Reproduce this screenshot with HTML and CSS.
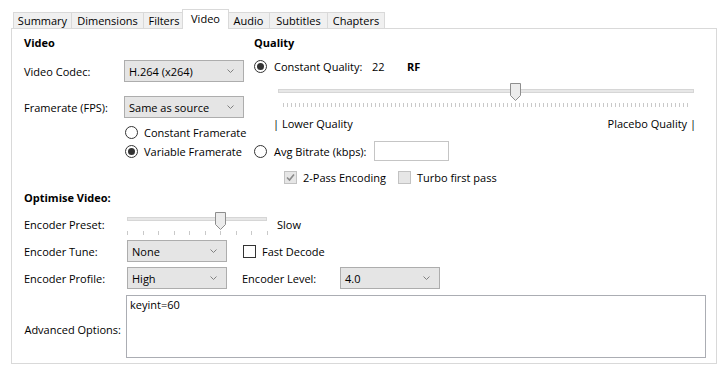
FILE: index.html
```html
<!DOCTYPE html>
<html>
<head>
<meta charset="utf-8">
<link rel="stylesheet" href="styles.css">
</head>
<body>
<div class="tabs">
  <div class="tab t-sum">Summary</div>
  <div class="tab t-dim">Dimensions</div>
  <div class="tab t-fil">Filters</div>
  <div class="tab active t-vid">Video</div>
  <div class="tab t-aud">Audio</div>
  <div class="tab t-sub">Subtitles</div>
  <div class="tab last t-cha">Chapters</div>
</div>
<div class="panel">
  <div class="top">
    <div class="col col-left">
      <div class="heading">Video</div>
      <div class="row row-codec">
        <span class="lbl lbl-100">Video Codec:</span>
        <div class="combo w120"><span>H.264 (x264)</span><svg class="chev" width="7" height="5" viewBox="0 0 7 5"><polyline points="0.5,0.5 3.5,3.5 6.5,0.5" fill="none" stroke="#808080" stroke-width="1"/></svg></div>
      </div>
      <div class="row row-fps">
        <span class="lbl lbl-100">Framerate (FPS):</span>
        <div class="combo w120"><span>Same as source</span><svg class="chev" width="7" height="5" viewBox="0 0 7 5"><polyline points="0.5,0.5 3.5,3.5 6.5,0.5" fill="none" stroke="#808080" stroke-width="1"/></svg></div>
      </div>
      <div class="opt-row fr1"><span class="radio"></span><span>Constant Framerate</span></div>
      <div class="opt-row fr2"><span class="radio on"></span><span>Variable Framerate</span></div>
    </div>
    <div class="col col-right">
      <div class="heading">Quality</div>
      <div class="opt-row cq"><span class="radio on"></span><span class="cq-lbl">Constant Quality:</span><span class="cq-val">22</span><b>RF</b></div>
      <div class="slider q-slider">
        <div class="track"></div>
        <div class="ticks"></div>
        <svg class="thumb" style="left:232px" width="11" height="18" viewBox="0 0 11 18"><path d="M0.5 0.5 H10.5 V12.5 L5.5 17.5 L0.5 12.5 Z" fill="#ececec" stroke="#8e8e8e"/></svg>
      </div>
      <div class="q-labels"><span>| Lower Quality</span><span>Placebo Quality |</span></div>
      <div class="opt-row avg"><span class="radio"></span><span class="avg-lbl">Avg Bitrate (kbps):</span><div class="input"></div></div>
      <div class="cb-row">
        <span class="check dis on"><svg width="11" height="11" viewBox="0 0 11 11"><polyline points="2,5.5 4.5,8 9,2.5" fill="none" stroke="#8a8a8a" stroke-width="1.6"/></svg></span><span class="cb-lbl">2-Pass Encoding</span>
        <span class="check dis turbo"></span><span class="cb-lbl">Turbo first pass</span>
      </div>
    </div>
  </div>

  <div class="opt">
    <div class="heading opt-head">Optimise Video:</div>
    <div class="row row-preset">
      <span class="lbl lbl-103">Encoder Preset:</span>
      <div class="slider p-slider">
        <div class="track"></div>
        <div class="ticks"></div>
        <svg class="thumb" style="left:88px" width="11" height="18" viewBox="0 0 11 18"><path d="M0.5 0.5 H10.5 V12.5 L5.5 17.5 L0.5 12.5 Z" fill="#ececec" stroke="#8e8e8e"/></svg>
      </div>
      <span class="slow">Slow</span>
    </div>
    <div class="row row-tune">
      <span class="lbl lbl-103">Encoder Tune:</span>
      <div class="combo w100"><span>None</span><svg class="chev" width="7" height="5" viewBox="0 0 7 5"><polyline points="0.5,0.5 3.5,3.5 6.5,0.5" fill="none" stroke="#808080" stroke-width="1"/></svg></div>
      <span class="check fast"></span><span class="cb-lbl">Fast Decode</span>
    </div>
    <div class="row row-profile">
      <span class="lbl lbl-103">Encoder Profile:</span>
      <div class="combo w100"><span>High</span><svg class="chev" width="7" height="5" viewBox="0 0 7 5"><polyline points="0.5,0.5 3.5,3.5 6.5,0.5" fill="none" stroke="#808080" stroke-width="1"/></svg></div>
      <span class="lbl level-lbl">Encoder Level:</span>
      <div class="combo w100"><span>4.0</span><svg class="chev" width="7" height="5" viewBox="0 0 7 5"><polyline points="0.5,0.5 3.5,3.5 6.5,0.5" fill="none" stroke="#808080" stroke-width="1"/></svg></div>
    </div>
    <div class="row row-adv">
      <span class="adv-lbl">Advanced Options:</span>
      <div class="textarea">keyint=60</div>
    </div>
  </div>
</div>
</body>
</html>
```

FILE: styles.css
```css
* { box-sizing: border-box; }
html, body { margin: 0; padding: 0; background: #fff; }
body {
  font-family: "Open Sans", "Noto Sans", "DejaVu Sans", sans-serif;
  font-size: 11px;
  color: #000;
  width: 722px;
  height: 372px;
  overflow: hidden;
}

/* tabs */
.tabs {
  display: flex;
  align-items: flex-end;
  margin: 9px 0 0 13px;
  height: 19px;
}
.tab {
  height: 16px;
  line-height: 15px;
  text-align: center;
  border: 1px solid #d9d9d9;
  border-bottom: none;
  border-right: none;
  background: #f0f0f0;
  white-space: nowrap;
  flex: none;
}
.t-sum { width: 58px; }
.t-dim { width: 72px; }
.t-fil { width: 41px; }
.t-vid { width: 47px; }
.t-aud { width: 42px; }
.t-sub { width: 58px; }
.t-cha { width: 58px; }
.tab.last { border-right: 1px solid #d9d9d9; }
.tab.active {
  height: 20px;
  line-height: 17px;
  background: #fff;
  border-right: 1px solid #d9d9d9;
  margin: 0 -2px -1px -2px;
  position: relative;
  z-index: 1;
}

/* panel */
.panel {
  margin-left: 11px;
  width: 706px;
  height: 336px;
  border: 1px solid #d9d9d9;
  padding-left: 12px;
}
.top {
  display: grid;
  grid-template-columns: 230px 1fr;
}
.col { display: flex; flex-direction: column; }
.heading {
  height: 16px;
  line-height: 16px;
  font-weight: bold;
  margin-top: 6px;
}
.row { display: flex; align-items: center; }
.lbl { white-space: nowrap; }
.lbl-100 { width: 100px; }
.lbl-103 { width: 103px; }

.row-codec { height: 22px; margin-top: 9px; }
.row-fps { height: 22px; margin-top: 14px; }

.combo {
  height: 22px;
  border: 1px solid #adadad;
  background: #e5e5e5;
  display: flex;
  align-items: center;
  justify-content: space-between;
  padding: 0 9px 0 4px;
  white-space: nowrap;
}
.w120 { width: 120px; }
.w100 { width: 100px; }
.chev { flex: none; }

.opt-row { display: flex; align-items: center; height: 18px; }
.radio {
  width: 13px;
  height: 13px;
  border: 1px solid #333;
  border-radius: 50%;
  background: #fff;
  margin-right: 6px;
  display: flex;
  align-items: center;
  justify-content: center;
  flex: none;
}
.radio.on::after {
  content: "";
  width: 7px;
  height: 7px;
  border-radius: 50%;
  background: #333;
}
.fr1 { margin-top: 5px; margin-left: 101px; }
.fr2 { margin-top: 1px; margin-left: 101px; }

.cq { margin-top: 6px; }
.cq .radio { margin-right: 7px; }
.cq-lbl { width: 98px; }
.cq-val { width: 35px; }

/* sliders */
.slider { position: relative; flex: none; }
.slider .track {
  position: absolute;
  left: 0; right: 0;
  height: 4px;
  background: #e7e7e7;
  border: 1px solid #d6d6d6;
}
.slider .ticks {
  position: absolute;
  height: 4px;
}
.slider .thumb { position: absolute; top: 0; }

.q-slider { margin-left: 24px; margin-top: 8px; width: 416px; height: 24px; }
.q-slider .track { top: 6px; }
.q-slider .ticks {
  top: 20px;
  left: 5px;
  width: 407px;
  background: repeating-linear-gradient(to right, #c9c9c9 0 1px, transparent 1px 4px);
}

.q-labels {
  display: flex;
  justify-content: space-between;
  margin-left: 19px;
  width: 423px;
  height: 16px;
  line-height: 16px;
  margin-top: 9px;
}

.avg { margin-top: 9px; height: 20px; }
.avg .radio { margin-right: 7px; }
.avg-lbl { width: 100px; }
.input {
  width: 75px;
  height: 20px;
  border: 1px solid #c5c5c5;
  background: #fff;
}

.cb-row {
  display: flex;
  align-items: center;
  height: 16px;
  margin-top: 8px;
  margin-left: 30px;
}
.check {
  width: 13px;
  height: 13px;
  border: 1px solid #333;
  background: #fff;
  flex: none;
  display: flex;
  align-items: center;
  justify-content: center;
  margin-right: 6px;
}
.check.dis { border-color: #c2c2c2; background: #e6e6e6; }
.turbo { margin-left: 12px; }

/* optimise */
.opt-head { margin-top: 5px; }
.row-preset { height: 26px; margin-top: 5px; }
.p-slider { width: 140px; height: 26px; }
.p-slider .thumb { top: 1px; }
.p-slider .track { top: 6px; }
.p-slider .ticks {
  top: 20px;
  left: 0;
  width: 141px;
  height: 4px;
  background: repeating-linear-gradient(to right, #c9c9c9 0 1px, transparent 1px 15.55px);
}
.slow { margin-left: 10px; }

.row-tune { height: 22px; margin-top: 3px; }
.fast { margin-left: 16px; }
.row-profile { height: 22px; margin-top: 5px; }
.level-lbl { width: 98px; margin-left: 15px; }

.row-adv { margin-top: 6px; align-items: center; }
.adv-lbl { width: 97px; text-align: right; margin-right: 5px; padding-top: 5px; }
.textarea {
  width: 580px;
  height: 63px;
  border: 1px solid #abadb3;
  background: #fff;
  padding: 1px 3px;
  line-height: 16px;
}
```
